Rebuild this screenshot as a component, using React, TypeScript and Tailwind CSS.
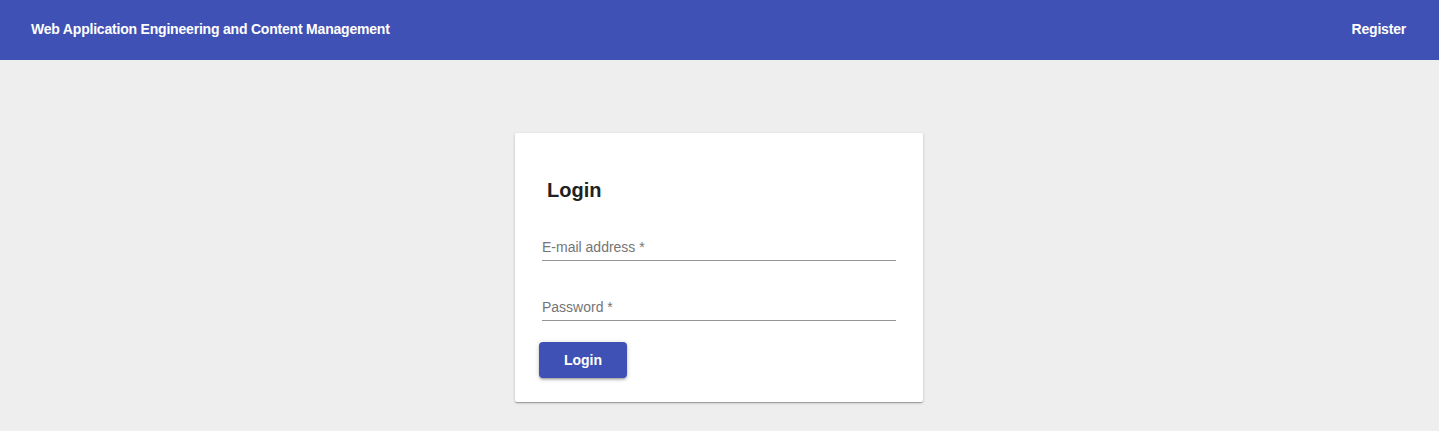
import React from "react";

function Field({ label }: { label: string }) {
  return (
    <div className="ml-[3px]">
      <div className="text-[14px] leading-[20px] text-[#757575]">{label}</div>
      <div className="mt-[3px] h-px bg-[#949494]" />
    </div>
  );
}

export default function App() {
  return (
    <div className="min-h-screen bg-[#eeeeee] font-['Liberation_Sans',Arial,sans-serif]">
      <header className="h-[60px] bg-[#3f51b5] flex items-center justify-between pl-[31px] pr-[33px] pb-[2px] text-white text-[14px] font-bold tracking-[-0.2px]">
        <span>Web Application Engineering and Content Management</span>
        <span>Register</span>
      </header>
      <main className="flex justify-center pt-[73px] pr-[1px]">
        <div className="w-[408px] bg-white rounded-[2px] pl-[24px] pr-[27px] pt-[43px] pb-[24px] shadow-[0_1px_3px_rgba(0,0,0,0.2),0_1px_1px_rgba(0,0,0,0.14),0_2px_1px_-1px_rgba(0,0,0,0.12)]">
          <h2 className="ml-[8px] text-[20px] leading-[28px] font-bold text-[#212121]">Login</h2>
          <div className="mt-[33px]">
            <Field label="E-mail address *" />
          </div>
          <div className="mt-[36px]">
            <Field label="Password *" />
          </div>
          <button className="mt-[21px] h-[36px] w-[88px] rounded-[4px] bg-[#3f51b5] text-white text-[14px] font-bold shadow-[0_1px_5px_rgba(0,0,0,0.2),0_2px_2px_rgba(0,0,0,0.14),0_3px_1px_-2px_rgba(0,0,0,0.12)]">
            Login
          </button>
        </div>
      </main>
    </div>
  );
}
